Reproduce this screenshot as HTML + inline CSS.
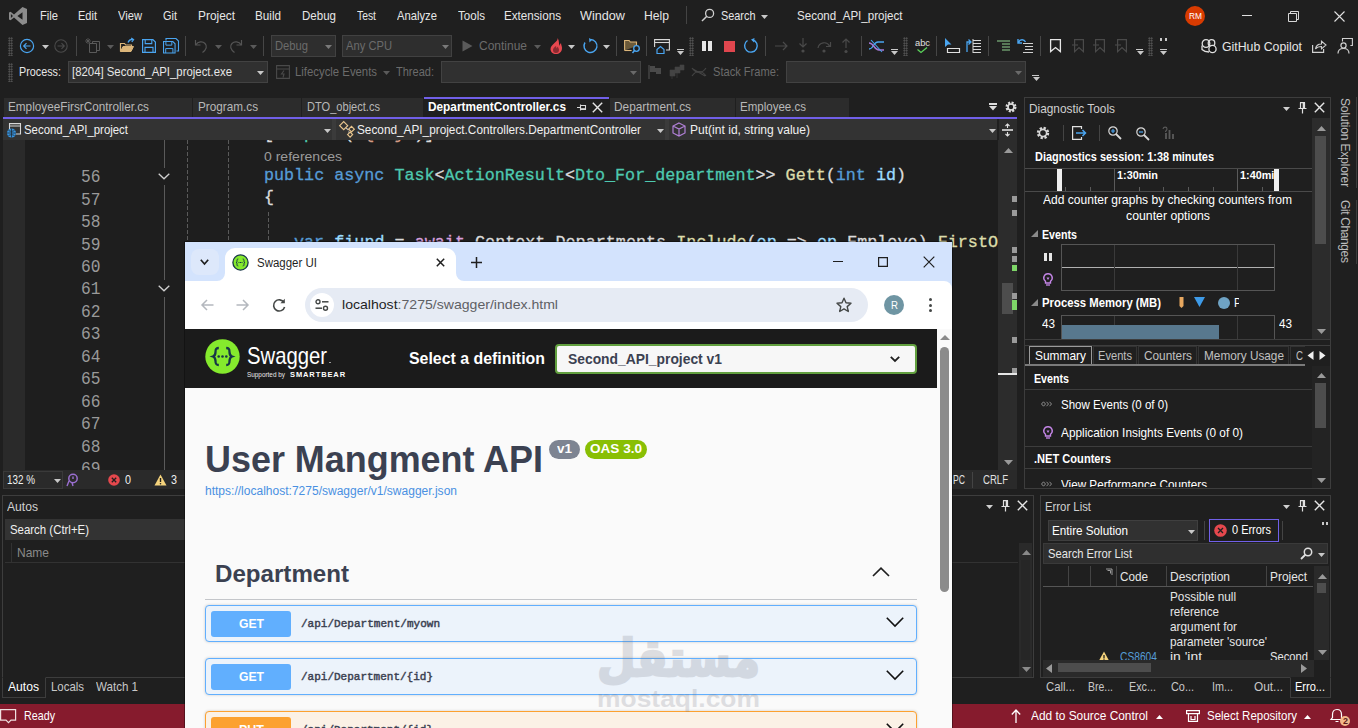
<!DOCTYPE html>
<html><head><meta charset="utf-8"><title>Second_API_project</title>
<style>
*{box-sizing:border-box;margin:0;padding:0}
html,body{width:1358px;height:728px;overflow:hidden;background:#1f1f1f}
body{position:relative;font-family:"Liberation Sans","DejaVu Sans",sans-serif;font-size:12px;color:#e6e6e6}
.a{position:absolute;white-space:nowrap}
.t{position:absolute;white-space:pre;transform-origin:0 50%}
.mono{font-family:"Liberation Mono","DejaVu Sans Mono",monospace;-webkit-text-stroke-width:.3px}
svg{position:absolute;overflow:visible}
.grip{position:absolute;width:5px;background-image:radial-gradient(circle,#5e5e5e 0.75px,transparent 1px);background-size:2.5px 2.5px}
.kw{color:#569cd6}.ty{color:#4ec9b0}.id{color:#9cdcfe}.fn{color:#dcdcaa}.pl{color:#dcdcdc}.cf{color:#d8a0df}
</style></head><body>
<svg style="left:8px;top:6px;" width="20" height="20" viewBox="0 0 20 20"><path d="M14.5 1 19 3v14l-4.5 2L6 11.6 2.6 14.2 1 13.4V6.6l1.6-.8L6 8.4ZM14.5 6.2 9.4 10l5.1 3.8ZM2.9 8.1v3.8L5 10Z" fill="#8c8c8c" fill-rule="evenodd"/></svg>
<div class="t" style="left:40px;top:7.77px;font-size:12.2px;line-height:16px;color:#e6e6e6;transform:scaleX(0.9165);">File</div>
<div class="t" style="left:78px;top:7.77px;font-size:12.2px;line-height:16px;color:#e6e6e6;transform:scaleX(0.9041);">Edit</div>
<div class="t" style="left:118px;top:7.77px;font-size:12.2px;line-height:16px;color:#e6e6e6;transform:scaleX(0.9159);">View</div>
<div class="t" style="left:163px;top:7.77px;font-size:12.2px;line-height:16px;color:#e6e6e6;transform:scaleX(0.8987);">Git</div>
<div class="t" style="left:198px;top:7.77px;font-size:12.2px;line-height:16px;color:#e6e6e6;transform:scaleX(0.9753);">Project</div>
<div class="t" style="left:255px;top:7.77px;font-size:12.2px;line-height:16px;color:#e6e6e6;transform:scaleX(0.9591);">Build</div>
<div class="t" style="left:302px;top:7.77px;font-size:12.2px;line-height:16px;color:#e6e6e6;transform:scaleX(0.9465);">Debug</div>
<div class="t" style="left:357px;top:7.77px;font-size:12.2px;line-height:16px;color:#e6e6e6;transform:scaleX(0.8498);">Test</div>
<div class="t" style="left:397px;top:7.77px;font-size:12.2px;line-height:16px;color:#e6e6e6;transform:scaleX(0.9225);">Analyze</div>
<div class="t" style="left:458px;top:7.77px;font-size:12.2px;line-height:16px;color:#e6e6e6;transform:scaleX(0.9489);">Tools</div>
<div class="t" style="left:504px;top:7.77px;font-size:12.2px;line-height:16px;color:#e6e6e6;transform:scaleX(0.9560);">Extensions</div>
<div class="t" style="left:580px;top:7.77px;font-size:12.2px;line-height:16px;color:#e6e6e6;transform:scaleX(1.0378);">Window</div>
<div class="t" style="left:644px;top:7.77px;font-size:12.2px;line-height:16px;color:#e6e6e6;transform:scaleX(0.9969);">Help</div>
<div class="a" style="left:686px;top:6px;width:1px;height:18px;background:#444;"></div>
<svg style="left:701px;top:8px;" width="14" height="14" viewBox="0 0 14 14"><circle cx="8.6" cy="5.4" r="4" fill="none" stroke="#d0d0d0" stroke-width="1.3"/><path d="M5.8 8.2 1 13" stroke="#d0d0d0" stroke-width="1.5"/></svg>
<div class="t" style="left:721px;top:7.77px;font-size:12.2px;line-height:16px;color:#e6e6e6;transform:scaleX(0.8932);">Search</div>
<svg style="left:761px;top:15px;" width="7" height="4" viewBox="0 0 7 4"><path d="M0 0H7L3.5 4Z" fill="#c8c8c8"/></svg>
<div class="t" style="left:796.5px;top:7.77px;font-size:12.2px;line-height:16px;color:#e6e6e6;transform:scaleX(0.9494);">Second_API_project</div>
<div class="a" style="left:1185px;top:6px;width:20px;height:20px;background:#d83b01;border-radius:50%"></div>
<div class="t" style="left:1188.5px;top:11.05px;font-size:8.5px;line-height:11px;color:#fff;transform:scaleX(0.9823);">RM</div>
<div class="a" style="left:1242px;top:15px;width:10px;height:1px;background:#e0e0e0;"></div>
<svg style="left:1288px;top:11px;" width="11" height="11" viewBox="0 0 11 11"><path d="M.5 2.5h8v8h-8z" fill="none" stroke="#d8d8d8"/><path d="M2.5 2.5v-2h8v8h-2" fill="none" stroke="#d8d8d8"/></svg>
<svg style="left:1334px;top:11px;" width="11" height="11" viewBox="0 0 11 11"><path d="M.5.5l10 10M10.500 .5l-10 10" stroke="#e0e0e0" stroke-width="1.1"/></svg>
<div class="grip" style="left:8px;top:37px;height:19px"></div>
<svg style="left:19px;top:38px;" width="16" height="16" viewBox="0 0 16 16"><circle cx="8" cy="8" r="6.6" fill="none" stroke="#4aa5f0" stroke-width="1.2"/><path d="M11.500 8H5M7.5 5.2 4.7 8l2.8 2.8" fill="none" stroke="#4aa5f0" stroke-width="1.2"/></svg>
<svg style="left:42px;top:45px;" width="7" height="4" viewBox="0 0 7 4"><path d="M0 0H7L3.5 4Z" fill="#c8c8c8"/></svg>
<svg style="left:53px;top:38px;" width="16" height="16" viewBox="0 0 16 16"><circle cx="8" cy="8" r="6.2" fill="none" stroke="#4a4a4a" stroke-width="1.1"/><path d="M4.5 8H11M8.5 5.2 11.300 8l-2.800 2.800" fill="none" stroke="#4a4a4a" stroke-width="1.1"/></svg>
<div class="a" style="left:76px;top:36px;width:1px;height:20px;background:#464646;"></div>
<svg style="left:85px;top:38px;" width="16" height="16" viewBox="0 0 16 16"><path d="M4.5 5.500h7v9h-7z M7.5 5.500v-2h7v9h-3" fill="none" stroke="#5a5a5a"/><path d="M3 0v6M0 3h6M1 1l4 4M5 1 1 5" stroke="#5a5a5a" stroke-width=".8"/></svg>
<svg style="left:107px;top:45px;" width="7" height="4" viewBox="0 0 7 4"><path d="M0 0H7L3.5 4Z" fill="#5a5a5a"/></svg>
<svg style="left:119px;top:38px;" width="17" height="16" viewBox="0 0 17 16"><path d="M1.500 13.500v-8h4l1.200 1.500h5.800v2" fill="none" stroke="#dcb67a" stroke-width="1.2"/><path d="M1.500 13.500 4 8.500h10.500l-2.500 5z" fill="#dcb67a" stroke="#dcb67a"/><path d="M9 4.500c1-2.500 3-3.200 5-3M12.200 0l2.300 1.600-1.700 2.200" fill="none" stroke="#4aa5f0" stroke-width="1.3"/></svg>
<svg style="left:142px;top:39px;" width="14" height="14" viewBox="0 0 14 14"><path d="M.6.6h10.300l2.500 2.500v10.300H.6z" fill="none" stroke="#4aa5f0" stroke-width="1.2"/><path d="M3.200.6v4h6.600v-4M3 13.400v-5h8v5" fill="none" stroke="#4aa5f0" stroke-width="1.100"/></svg>
<svg style="left:163px;top:38px;" width="16" height="16" viewBox="0 0 16 16"><g transform="translate(0 3) scale(.9)"><path d="M.6.6h10.300l2.500 2.500v10.300H.6z" fill="none" stroke="#4aa5f0" stroke-width="1.2"/><path d="M3.200.6v4h6.600v-4M3 13.400v-5h8v5" fill="none" stroke="#4aa5f0" stroke-width="1.100"/></g><path d="M3 2.500v-2h10l2.500 2.500v10h-2" fill="none" stroke="#4aa5f0" stroke-width="1.100"/></svg>
<div class="a" style="left:185px;top:36px;width:1px;height:20px;background:#464646;"></div>
<svg style="left:194px;top:39px;" width="14" height="14" viewBox="0 0 14 14"><path d="M1.500 1v5h5" fill="none" stroke="#555" stroke-width="1.2"/><path d="M1.800 5.800C4 2.500 8.500 1.800 11 4.500s1.500 6-2.500 9" fill="none" stroke="#555" stroke-width="1.200"/></svg>
<svg style="left:215px;top:45px;" width="7" height="4" viewBox="0 0 7 4"><path d="M0 0H7L3.5 4Z" fill="#5a5a5a"/></svg>
<svg style="left:229px;top:39px;" width="14" height="14" viewBox="0 0 14 14"><path d="M12.500 1v5h-5" fill="none" stroke="#555" stroke-width="1.2"/><path d="M12.200 5.800C10 2.500 5.500 1.800 3 4.500s-1.500 6 2.500 9" fill="none" stroke="#555" stroke-width="1.200"/></svg>
<svg style="left:250px;top:45px;" width="7" height="4" viewBox="0 0 7 4"><path d="M0 0H7L3.5 4Z" fill="#5a5a5a"/></svg>
<div class="a" style="left:263px;top:36px;width:1px;height:20px;background:#464646;"></div>
<div class="a" style="left:271px;top:35px;width:65px;height:22px;background:#2e2e2e;border:1px solid #414141;"></div>
<div class="t" style="left:275px;top:37.77px;font-size:12.2px;line-height:16px;color:#6b6b6b;transform:scaleX(0.9187);">Debug</div>
<svg style="left:325px;top:45px;" width="7" height="4" viewBox="0 0 7 4"><path d="M0 0H7L3.5 4Z" fill="#7a7a7a"/></svg>
<div class="a" style="left:342px;top:35px;width:110px;height:22px;background:#2e2e2e;border:1px solid #414141;"></div>
<div class="t" style="left:346px;top:37.77px;font-size:12.2px;line-height:16px;color:#6b6b6b;transform:scaleX(0.9177);">Any CPU</div>
<svg style="left:442px;top:45px;" width="7" height="4" viewBox="0 0 7 4"><path d="M0 0H7L3.5 4Z" fill="#7a7a7a"/></svg>
<svg style="left:462px;top:40px;" width="11" height="12" viewBox="0 0 11 12"><path d="M.5.500 10.500 6 .5 11.500Z" fill="#5a5a5a"/></svg>
<div class="t" style="left:479px;top:37.77px;font-size:12.2px;line-height:16px;color:#6b6b6b;transform:scaleX(0.9837);">Continue</div>
<svg style="left:534px;top:45px;" width="7" height="4" viewBox="0 0 7 4"><path d="M0 0H7L3.5 4Z" fill="#5a5a5a"/></svg>
<svg style="left:548px;top:38px;" width="16" height="16" viewBox="0 0 16 16"><path d="M9.500 0c.5 2-1 3-2.500 4.500C5 6.500 2.500 8 2.500 11c0 3 2.500 5 5.500 5s6-2 6-6c0-2-1-3-1-5-1 1-1.500 2-1.500 3C10.500 5.500 11.500 2.500 9.500 0z" fill="#e8484f"/><path d="M8 8c-2 1.500-3 2.500-3 4a3 3 0 006 0c0-1.500-1-2-1-3.500-.8.500-1.200 1.200-1.200 2C8 9.500 8.500 9 8 8z" fill="#8a2a30"/></svg>
<svg style="left:568px;top:45px;" width="7" height="4" viewBox="0 0 7 4"><path d="M0 0H7L3.5 4Z" fill="#c8c8c8"/></svg>
<svg style="left:582px;top:38px;" width="16" height="16" viewBox="0 0 16 16"><path d="M8.500 1.500A6.500 6.500 0 1 1 3 4.500" fill="none" stroke="#4aa5f0" stroke-width="1.400"/><path d="M5.500 1.200h4v4" fill="none" stroke="#4aa5f0" stroke-width="0"/><path d="M7 0l3 1.800L7.500 4.500z" fill="#4aa5f0"/></svg>
<svg style="left:603px;top:45px;" width="7" height="4" viewBox="0 0 7 4"><path d="M0 0H7L3.5 4Z" fill="#c8c8c8"/></svg>
<div class="a" style="left:616px;top:36px;width:1px;height:20px;background:#464646;"></div>
<svg style="left:624px;top:38px;" width="17" height="16" viewBox="0 0 17 16"><path d="M.6 12.500v-10h4.500l1.200 1.500h6.200v4" fill="#6b5a3a" stroke="#dcb67a" stroke-width="1.1"/><path d="M.6 12.500h7" stroke="#dcb67a" stroke-width="1.1"/><circle cx="12.500" cy="10.500" r="2.800" fill="#1f1f1f" stroke="#4aa5f0" stroke-width="1.300"/><path d="M10.500 12.500 8.500 15" stroke="#4aa5f0" stroke-width="1.500"/></svg>
<div class="a" style="left:646px;top:36px;width:1px;height:20px;background:#464646;"></div>
<svg style="left:654px;top:38px;" width="16" height="16" viewBox="0 0 16 16"><path d="M.6 9V1.600h14.800V12H12" fill="none" stroke="#d8d8d8" stroke-width="1.1"/><path d="M.6 4.500h14.800" stroke="#d8d8d8" stroke-width="1.100"/><path d="M3 11.500 6.500 8.500l3.500 3v4H3z" fill="none" stroke="#4aa5f0" stroke-width="1.200"/></svg>
<div class="a" style="left:677px;top:49px;width:7px;height:1px;background:#c8c8c8;"></div>
<svg style="left:677px;top:51px;" width="7" height="4" viewBox="0 0 7 4"><path d="M0 0H7L3.5 4Z" fill="#c8c8c8"/></svg>
<div class="grip" style="left:689px;top:37px;height:19px"></div>
<div class="a" style="left:702px;top:41px;width:4px;height:10px;background:#e6e6e6;"></div>
<div class="a" style="left:708px;top:41px;width:4px;height:10px;background:#e6e6e6;"></div>
<div class="a" style="left:724px;top:41px;width:11px;height:11px;background:#e0464e;"></div>
<svg style="left:743px;top:38px;" width="16" height="16" viewBox="0 0 16 16"><path d="M4.500 2.500A6.300 6.300 0 1 0 9.500 1.700" fill="none" stroke="#4aa5f0" stroke-width="1.400"/><path d="M7 4.800V.6h4.200" fill="none" stroke="#4aa5f0" stroke-width="0"/><path d="M11.500 0 8 1.500l3 3z" fill="#4aa5f0"/></svg>
<div class="a" style="left:765px;top:36px;width:1px;height:20px;background:#464646;"></div>
<svg style="left:775px;top:40px;" width="14" height="12" viewBox="0 0 14 12"><path d="M0 6h12M8 2l4 4-4 4" fill="none" stroke="#4a4a4a" stroke-width="1.200"/></svg>
<svg style="left:797px;top:38px;" width="12" height="16" viewBox="0 0 12 16"><path d="M6 0v9M2.500 5.500 6 9l3.500-3.500" fill="none" stroke="#4a4a4a" stroke-width="1.200"/><circle cx="6" cy="13" r="1.600" fill="#4a4a4a"/></svg>
<svg style="left:817px;top:39px;" width="15" height="14" viewBox="0 0 15 14"><path d="M1 9C2 3 10 2 12.500 7M13.500 3v4.500H9" fill="none" stroke="#4a4a4a" stroke-width="1.200"/><circle cx="7" cy="12" r="1.600" fill="#4a4a4a"/></svg>
<svg style="left:840px;top:38px;" width="12" height="16" viewBox="0 0 12 16"><path d="M6 10V1M2.500 4.500 6 1l3.500 3.500" fill="none" stroke="#4a4a4a" stroke-width="1.200"/><circle cx="6" cy="13.500" r="1.600" fill="#4a4a4a"/></svg>
<div class="a" style="left:861px;top:36px;width:1px;height:20px;background:#464646;"></div>
<svg style="left:869px;top:39px;" width="16" height="14" viewBox="0 0 16 14"><path d="M0 10c5 0 4-7 9-7h6" fill="none" stroke="#4aa5f0" stroke-width="1.300"/><path d="M0 4c5 0 5 7 10 7h5" fill="none" stroke="#a679d8" stroke-width="1.300"/><path d="M2 1l11 12" stroke="#4aa5f0" stroke-width="1.100"/></svg>
<div class="a" style="left:891px;top:49px;width:7px;height:1px;background:#c8c8c8;"></div>
<svg style="left:891px;top:51px;" width="7" height="4" viewBox="0 0 7 4"><path d="M0 0H7L3.5 4Z" fill="#c8c8c8"/></svg>
<div class="grip" style="left:903px;top:37px;height:19px"></div>
<div class="t" style="left:914.5px;top:36.88px;font-size:9px;line-height:12px;color:#e0e0e0;transform:scaleX(1.0334);">abc</div>
<svg style="left:917px;top:47px;" width="11" height="6" viewBox="0 0 11 6"><path d="M.5 2.500 4 5.500 10 .5" fill="none" stroke="#5bd35b" stroke-width="1.300"/></svg>
<div class="a" style="left:936px;top:36px;width:1px;height:20px;background:#464646;"></div>
<svg style="left:944px;top:38px;" width="17" height="16" viewBox="0 0 17 16"><path d="M1 0l6.500 6.500H4L1 9z" fill="#4aa5f0"/><path d="M3.500 10.500h12v4h-12z" fill="none" stroke="#e0e0e0" stroke-width="1.200"/></svg>
<svg style="left:966px;top:38px;" width="16" height="16" viewBox="0 0 16 16"><path d="M7 2.500h8M7 5.500h8M7 8.500h8M7 11.500h8M7 14.500h8" stroke="#d8d8d8" stroke-width="1.200"/><path d="M7 1v14" stroke="#d8d8d8"/><path d="M1 14V4h3M2.500 1.500 5 4 2.500 6.500" fill="none" stroke="#4aa5f0" stroke-width="1.300"/></svg>
<div class="a" style="left:988px;top:36px;width:1px;height:20px;background:#464646;"></div>
<svg style="left:997px;top:40px;" width="14" height="12" viewBox="0 0 14 12"><path d="M0 1h13M5 4h8M5 7h8M5 10h8" stroke="#8fd18f" stroke-width="1.200"/></svg>
<svg style="left:1017px;top:38px;" width="17" height="15" viewBox="0 0 17 15"><path d="M6 5.500h10M8 8.500h8M8 11.500h8M6 14.500h10" stroke="#d0d0d0" stroke-width="1.200"/><path d="M1 1v4h4M1.500 4.500C3 1 7 1 8.500 4" fill="none" stroke="#4aa5f0" stroke-width="1.400"/></svg>
<div class="a" style="left:1040px;top:36px;width:1px;height:20px;background:#464646;"></div>
<svg style="left:1050px;top:39px;" width="11" height="14" viewBox="0 0 11 14"><path d="M.6.6h9.800v12L5.500 8.500.6 12.600z" fill="none" stroke="#e6e6e6" stroke-width="1.300"/></svg>
<svg style="left:1072px;top:39px;" width="13" height="14" viewBox="0 0 13 14"><path d="M2.600.6h8.800v12L7 8.500 2.600 12.600z" fill="none" stroke="#4a4a4a" stroke-width="1.200"/><path d="M0 6h6" stroke="#4a4a4a" stroke-width="1.100"/></svg>
<svg style="left:1093px;top:39px;" width="13" height="14" viewBox="0 0 13 14"><path d="M2.600.6h8.800v12L7 8.500 2.600 12.600z" fill="none" stroke="#4a4a4a" stroke-width="1.200"/><path d="M0 6h6" stroke="#4a4a4a" stroke-width="1.100"/></svg>
<svg style="left:1115px;top:39px;" width="13" height="14" viewBox="0 0 13 14"><path d="M2.600.6h8.800v12L7 8.500 2.600 12.600z" fill="none" stroke="#4a4a4a" stroke-width="1.200"/><path d="M0 6h6" stroke="#4a4a4a" stroke-width="1.100"/></svg>
<div class="a" style="left:1136px;top:49px;width:7px;height:1px;background:#c8c8c8;"></div>
<svg style="left:1136.5px;top:51px;" width="7" height="4" viewBox="0 0 7 4"><path d="M0 0H7L3.5 4Z" fill="#c8c8c8"/></svg>
<div class="grip" style="left:1148px;top:37px;height:19px"></div>
<div class="a" style="left:1160px;top:38px;width:2px;height:3px;background:#c8c8c8;"></div>
<div class="a" style="left:1165px;top:38px;width:2px;height:3px;background:#c8c8c8;"></div>
<div class="a" style="left:1160px;top:49px;width:7px;height:1px;background:#c8c8c8;"></div>
<svg style="left:1160px;top:51px;" width="7" height="4" viewBox="0 0 7 4"><path d="M0 0H7L3.5 4Z" fill="#c8c8c8"/></svg>
<svg style="left:1201px;top:38px;" width="16" height="16" viewBox="0 0 16 16"><circle cx="5" cy="5.500" r="3.800" fill="none" stroke="#e0e0e0" stroke-width="1.300"/><circle cx="10.500" cy="5" r="3.300" fill="none" stroke="#e0e0e0" stroke-width="1.300"/><path d="M1 7.500v4c2 2 5 2.500 7 2.500" fill="none" stroke="#e0e0e0" stroke-width="1.300"/><circle cx="11.500" cy="11" r="3.600" fill="#111" stroke="#e0e0e0" stroke-width="1.300"/></svg>
<div class="t" style="left:1222px;top:37.50px;font-size:13px;line-height:17px;color:#e6e6e6;transform:scaleX(0.9462);">GitHub Copilot</div>
<svg style="left:1312px;top:39px;" width="15" height="14" viewBox="0 0 15 14"><path d="M.6 6v7.400h11V10" fill="none" stroke="#d0d0d0" stroke-width="1.200"/><path d="M3.500 10c.5-3.500 3-5 6-5V2.200L14 6l-4.500 3.800V7.500c-2.500 0-4.500.5-6 2.500z" fill="none" stroke="#d0d0d0" stroke-width="1.100"/></svg>
<svg style="left:1337px;top:38px;" width="16" height="16" viewBox="0 0 16 16"><path d="M5.500 3.500v-3h9.900v7h-2" fill="none" stroke="#d0d0d0" stroke-width="1.100"/><circle cx="6.500" cy="7.500" r="2.600" fill="none" stroke="#d0d0d0" stroke-width="1.200"/><path d="M1 15.500c0-3.500 2.500-5 5.500-5s5.500 1.500 5.500 5" fill="none" stroke="#d0d0d0" stroke-width="1.200"/></svg>
<div class="grip" style="left:8px;top:63px;height:19px"></div>
<div class="t" style="left:19px;top:63.77px;font-size:12.2px;line-height:16px;color:#e6e6e6;transform:scaleX(0.8857);">Process:</div>
<div class="a" style="left:68px;top:61px;width:200px;height:22px;background:#303030;border:1px solid #424242;"></div>
<div class="t" style="left:72px;top:63.77px;font-size:12.2px;line-height:16px;color:#e6e6e6;transform:scaleX(0.9333);">[8204] Second_API_project.exe</div>
<svg style="left:257px;top:71px;" width="7" height="4" viewBox="0 0 7 4"><path d="M0 0H7L3.5 4Z" fill="#c8c8c8"/></svg>
<svg style="left:276px;top:65px;" width="14" height="14" viewBox="0 0 14 14"><path d="M.6.6h12.800v12.800H.6zM.6 4h12.800" fill="none" stroke="#4a4a4a" stroke-width="1.100"/><path d="M8 5.500 5.500 9H8l-1 3.500" fill="none" stroke="#4a4a4a" stroke-width="1.100"/></svg>
<div class="t" style="left:295px;top:63.77px;font-size:12.2px;line-height:16px;color:#6b6b6b;transform:scaleX(0.9312);">Lifecycle Events</div>
<svg style="left:383px;top:71px;" width="7" height="4" viewBox="0 0 7 4"><path d="M0 0H7L3.5 4Z" fill="#5a5a5a"/></svg>
<div class="t" style="left:396px;top:63.77px;font-size:12.2px;line-height:16px;color:#6b6b6b;transform:scaleX(0.9044);">Thread:</div>
<div class="a" style="left:441px;top:61px;width:200px;height:22px;background:#303030;border:1px solid #424242;"></div>
<svg style="left:630px;top:71px;" width="7" height="4" viewBox="0 0 7 4"><path d="M0 0H7L3.5 4Z" fill="#6a6a6a"/></svg>
<svg style="left:648px;top:65px;" width="14" height="14" viewBox="0 0 14 14"><path d="M1 0v14" stroke="#4a4a4a" stroke-width="1.300"/><path d="M2 1h5v2h6v6H8V7H2z" fill="#4a4a4a"/></svg>
<svg style="left:670px;top:65px;" width="15" height="14" viewBox="0 0 15 14"><path d="M0 5h5v6H0zM5 2h5v6H5zM10 0h4v5h-4zM2 11v3M7 8v5" fill="#444" stroke="#444" stroke-width=".6"/></svg>
<svg style="left:692px;top:66px;" width="15" height="12" viewBox="0 0 15 12"><path d="M0 2c4 6 10 6 14 0M0 10c4-6 10-6 14 0M1 3l12 7" fill="none" stroke="#444" stroke-width="1.100"/></svg>
<div class="t" style="left:713px;top:63.77px;font-size:12.2px;line-height:16px;color:#6b6b6b;transform:scaleX(0.9107);">Stack Frame:</div>
<div class="a" style="left:786px;top:61px;width:240px;height:22px;background:#303030;border:1px solid #424242;"></div>
<svg style="left:1015px;top:71px;" width="7" height="4" viewBox="0 0 7 4"><path d="M0 0H7L3.5 4Z" fill="#6a6a6a"/></svg>
<div class="a" style="left:1032px;top:75px;width:7px;height:1px;background:#c8c8c8;"></div>
<svg style="left:1032.5px;top:77px;" width="7" height="4" viewBox="0 0 7 4"><path d="M0 0H7L3.5 4Z" fill="#c8c8c8"/></svg>
<div class="a" style="left:4px;top:98px;width:188px;height:19px;background:#2c2c2c;"></div>
<div class="t" style="left:8px;top:99.27px;font-size:12.2px;line-height:16px;color:#b8b8b8;transform:scaleX(0.9638);">EmployeeFirsrController.cs</div>
<div class="a" style="left:193px;top:98px;width:108px;height:19px;background:#2c2c2c;"></div>
<div class="t" style="left:198px;top:99.27px;font-size:12.2px;line-height:16px;color:#b8b8b8;transform:scaleX(0.9629);">Program.cs</div>
<div class="a" style="left:302px;top:98px;width:121px;height:19px;background:#2c2c2c;"></div>
<div class="t" style="left:307px;top:99.27px;font-size:12.2px;line-height:16px;color:#b8b8b8;transform:scaleX(0.9081);">DTO_object.cs</div>
<div class="a" style="left:610px;top:98px;width:125px;height:19px;background:#2c2c2c;"></div>
<div class="t" style="left:614px;top:99.27px;font-size:12.2px;line-height:16px;color:#b8b8b8;transform:scaleX(0.9716);">Department.cs</div>
<div class="a" style="left:736px;top:98px;width:113px;height:19px;background:#2c2c2c;"></div>
<div class="t" style="left:740px;top:99.27px;font-size:12.2px;line-height:16px;color:#b8b8b8;transform:scaleX(0.9458);">Employee.cs</div>
<div class="a" style="left:424px;top:97px;width:185px;height:2px;background:#7160e8;"></div>
<div class="a" style="left:424px;top:99px;width:185px;height:18px;background:#1f1f1f;"></div>
<div class="t" style="left:428px;top:99.27px;font-size:12.2px;line-height:16px;color:#ffffff;font-weight:700;transform:scaleX(0.9702);">DepartmentController.cs</div>
<svg style="left:577px;top:103px;" width="10" height="9" viewBox="0 0 10 9"><path d="M0 4.500h3.500M3.500 1.500v6M3.500 2.500h5v4h-5" fill="none" stroke="#d8d8d8" stroke-width="1.100"/><path d="M3.500 6h5" stroke="#d8d8d8" stroke-width="1.600"/></svg>
<svg style="left:592px;top:102px;" width="11" height="11" viewBox="0 0 11 11"><path d="M.8.800l9.400 9.400M10.200.8.800 10.200" stroke="#e6e6e6" stroke-width="1.400"/></svg>
<div class="a" style="left:989px;top:103px;width:8px;height:2px;background:#dcdcdc;"></div>
<svg style="left:989.0px;top:106px;" width="8.0" height="4.5" viewBox="0 0 8.0 4.5"><path d="M0 0H8.0L4.0 4.5Z" fill="#dcdcdc"/></svg>
<svg style="left:1004.5px;top:101px;" width="12" height="12" viewBox="0 0 12 12"><circle cx="6" cy="6" r="4" fill="none" stroke="#dcdcdc" stroke-width="3" stroke-dasharray="1.900 1.240"/><circle cx="6" cy="6" r="3" fill="none" stroke="#dcdcdc" stroke-width="1.600"/></svg>
<div class="a" style="left:3px;top:117px;width:1014px;height:2px;background:#7160e8;"></div>
<div class="a" style="left:3px;top:119px;width:1014px;height:21px;background:#1f1f1f;"></div>
<div class="a" style="left:3px;top:119px;width:329px;height:21px;background:#333333;"></div>
<div class="a" style="left:332px;top:119px;width:4px;height:21px;background:#3b3b3b;"></div>
<div class="a" style="left:336px;top:119px;width:329px;height:21px;background:#333333;"></div>
<div class="a" style="left:665px;top:119px;width:4px;height:21px;background:#3b3b3b;"></div>
<div class="a" style="left:669px;top:119px;width:328px;height:21px;background:#333333;"></div>
<div class="a" style="left:999px;top:119px;width:18px;height:21px;background:#2c2c2c;"></div>
<svg style="left:6px;top:122px;" width="16" height="16" viewBox="0 0 16 16"><path d="M3.500 10V1.600h11V12H10" fill="none" stroke="#d8d8d8" stroke-width="1.100"/><path d="M3.500 4h11" stroke="#d8d8d8"/><circle cx="5.500" cy="11" r="4.500" fill="#3794e0"/><path d="M1 11h9M5.500 6.500v9M2.500 8.500c2 1 4 1 6 0M2.500 13.500c2-1 4-1 6 0" fill="none" stroke="#1f1f1f" stroke-width=".7"/></svg>
<div class="t" style="left:24px;top:121.77px;font-size:12.2px;line-height:16px;color:#f0f0f0;transform:scaleX(0.9359);">Second_API_project</div>
<svg style="left:323.5px;top:129px;" width="7" height="4" viewBox="0 0 7 4"><path d="M0 0H7L3.5 4Z" fill="#c8c8c8"/></svg>
<svg style="left:339px;top:121px;" width="16" height="17" viewBox="0 0 16 17"><path d="M7 7l2.500 2M9.500 10.500l1 1.500" stroke="#bdbdbd" stroke-width="1.100"/><path d="M.7 4.700 4.700.7l4 4-4 4z" fill="none" stroke="#e8c58d" stroke-width="1.200"/><path d="M9.700 8.200 12.500 5.400l2.800 2.800-2.800 2.800z" fill="none" stroke="#e8c58d" stroke-width="1.200"/><path d="M8.600 13.600l2.500-2.500 2.500 2.500-2.500 2.500z" fill="none" stroke="#e8c58d" stroke-width="1.200"/></svg>
<div class="t" style="left:357px;top:121.77px;font-size:12.2px;line-height:16px;color:#f0f0f0;transform:scaleX(0.9682);">Second_API_project.Controllers.DepartmentController</div>
<svg style="left:656.5px;top:129px;" width="7" height="4" viewBox="0 0 7 4"><path d="M0 0H7L3.5 4Z" fill="#c8c8c8"/></svg>
<svg style="left:672px;top:122px;" width="14" height="15" viewBox="0 0 14 15"><path d="M7 1 13 4v7l-6 3-6-3V4z M1 4l6 3 6-3M7 7v7" fill="none" stroke="#b180d7" stroke-width="1.200"/></svg>
<div class="t" style="left:690px;top:121.77px;font-size:12.2px;line-height:16px;color:#f0f0f0;transform:scaleX(0.9896);">Put(int id, string value)</div>
<svg style="left:988.5px;top:129px;" width="7" height="4" viewBox="0 0 7 4"><path d="M0 0H7L3.5 4Z" fill="#c8c8c8"/></svg>
<svg style="left:1002px;top:123.5px;" width="12" height="12" viewBox="0 0 12 12"><path d="M0 6h11" stroke="#e0e0e0" stroke-width="1.600"/><path d="M5.500 0v4M5.500 8v4M3.500 2 5.500 0l2 2M3.500 10l2 2 2-2" fill="none" stroke="#e0e0e0" stroke-width="1.100"/></svg>
<div class="a" style="left:3px;top:140px;width:995px;height:330px;background:#1e1e1e;"></div>
<div class="a" style="left:3px;top:140px;width:22px;height:330px;background:#2a2a2a;"></div>
<div class="a" style="left:164px;top:140px;width:1px;height:28px;background:#5a5a5a;"></div>
<div class="a" style="left:164px;top:185px;width:1px;height:95px;background:#5a5a5a;"></div>
<div class="a" style="left:164px;top:297px;width:1px;height:173px;background:#5a5a5a;"></div>
<svg style="left:158px;top:173px;" width="12" height="7" viewBox="0 0 12 7"><path d="M.7.700 6 5.800 11.300.7" fill="none" stroke="#d0d0d0" stroke-width="1.300"/></svg>
<svg style="left:158px;top:285px;" width="12" height="7" viewBox="0 0 12 7"><path d="M.7.700 6 5.800 11.300.7" fill="none" stroke="#d0d0d0" stroke-width="1.300"/></svg>
<div class="a" style="left:187px;top:140px;width:1px;height:330px;background:repeating-linear-gradient(#5a5a5a 0 4px,transparent 4px 6px)"></div>
<div class="a" style="left:228px;top:140px;width:1px;height:330px;background:repeating-linear-gradient(#5a5a5a 0 4px,transparent 4px 6px)"></div>
<div class="a" style="left:268px;top:212px;width:1px;height:258px;background:repeating-linear-gradient(#5a5a5a 0 4px,transparent 4px 6px)"></div>
<div class="t mono" style="left:81px;top:166.14px;font-size:17.5px;line-height:23px;color:#9a9a9a;transform:scaleX(0.9279);-webkit-text-stroke-width:0;">56</div>
<div class="t mono" style="left:81px;top:188.60px;font-size:17.5px;line-height:23px;color:#9a9a9a;transform:scaleX(0.9279);-webkit-text-stroke-width:0;">57</div>
<div class="t mono" style="left:81px;top:211.06px;font-size:17.5px;line-height:23px;color:#9a9a9a;transform:scaleX(0.9279);-webkit-text-stroke-width:0;">58</div>
<div class="t mono" style="left:81px;top:233.52px;font-size:17.5px;line-height:23px;color:#9a9a9a;transform:scaleX(0.9279);-webkit-text-stroke-width:0;">59</div>
<div class="t mono" style="left:81px;top:255.98px;font-size:17.5px;line-height:23px;color:#9a9a9a;transform:scaleX(0.9279);-webkit-text-stroke-width:0;">60</div>
<div class="t mono" style="left:81px;top:278.44px;font-size:17.5px;line-height:23px;color:#9a9a9a;transform:scaleX(0.9279);-webkit-text-stroke-width:0;">61</div>
<div class="t mono" style="left:81px;top:300.90px;font-size:17.5px;line-height:23px;color:#9a9a9a;transform:scaleX(0.9279);-webkit-text-stroke-width:0;">62</div>
<div class="t mono" style="left:81px;top:323.36px;font-size:17.5px;line-height:23px;color:#9a9a9a;transform:scaleX(0.9279);-webkit-text-stroke-width:0;">63</div>
<div class="t mono" style="left:81px;top:345.82px;font-size:17.5px;line-height:23px;color:#9a9a9a;transform:scaleX(0.9279);-webkit-text-stroke-width:0;">64</div>
<div class="t mono" style="left:81px;top:368.28px;font-size:17.5px;line-height:23px;color:#9a9a9a;transform:scaleX(0.9279);-webkit-text-stroke-width:0;">65</div>
<div class="t mono" style="left:81px;top:390.74px;font-size:17.5px;line-height:23px;color:#9a9a9a;transform:scaleX(0.9279);-webkit-text-stroke-width:0;">66</div>
<div class="t mono" style="left:81px;top:413.20px;font-size:17.5px;line-height:23px;color:#9a9a9a;transform:scaleX(0.9279);-webkit-text-stroke-width:0;">67</div>
<div class="t mono" style="left:81px;top:435.66px;font-size:17.5px;line-height:23px;color:#9a9a9a;transform:scaleX(0.9279);-webkit-text-stroke-width:0;">68</div>
<div class="t mono" style="left:81px;top:458.12px;font-size:17.5px;line-height:23px;color:#9a9a9a;transform:scaleX(0.9279);-webkit-text-stroke-width:0;">69</div>
<div class="a" style="left:260px;top:140px;width:200px;height:6px;overflow:hidden"><div class="t mono" style="left:4px;top:-15.500px;font-size:16.700px;line-height:20px;color:#dcdcdc">[<span class="ty">HttpGet</span>(<span style="color:#d69d85">"{id}"</span>)]</div></div>
<div class="t" style="left:264px;top:148.60px;font-size:12.7px;line-height:17px;color:#9a9a9a;transform:scaleX(1.1059);">0 references</div>
<div class="t mono" style="left:264px;top:164.55px;font-size:16.7px;line-height:22px;color:#dcdcdc;transform:scaleX(1.0016);"><span class="kw">public async</span> <span class="ty">Task</span><span class="pl">&lt;</span><span class="ty">ActionResult</span><span class="pl">&lt;</span><span class="ty">Dto_For_department</span><span class="pl">&gt;&gt;</span> <span class="fn">Gett</span><span class="pl">(</span><span class="kw">int</span> <span class="id">id</span><span class="pl">)</span></div>
<div class="t mono" style="left:264px;top:186.95px;font-size:16.7px;line-height:22px;color:#dcdcdc;transform:scaleX(0.9984);">{</div>
<div class="t mono" style="left:294px;top:232.45px;font-size:16.7px;line-height:22px;color:#dcdcdc;transform:scaleX(1.0042);"><span class="kw">var</span> <span class="id">fiund</span> = <span class="cf">await</span> Context.Departments.<span class="fn">Include</span>(<span class="id">op</span> =&gt; <span class="id">op</span>.Employe).<span class="fn">FirstO</span></div>
<div class="a" style="left:998px;top:140px;width:19px;height:330px;background:#2c2c2c;"></div>
<svg style="left:1003.5px;top:148px;" width="9" height="5" viewBox="0 0 9 5"><path d="M0 5H9L4.5 0Z" fill="#9a9a9a"/></svg>
<svg style="left:1003.5px;top:460px;" width="9" height="5" viewBox="0 0 9 5"><path d="M0 0H9L4.5 5Z" fill="#9a9a9a"/></svg>
<div class="a" style="left:1002px;top:283px;width:11px;height:31px;background:#4d4d4d;"></div>
<div class="a" style="left:1012px;top:196px;width:5px;height:6px;background:#9a9a9a;"></div>
<div class="a" style="left:1012px;top:210px;width:5px;height:6px;background:#9a9a9a;"></div>
<div class="a" style="left:1012px;top:247px;width:5px;height:6px;background:#9a9a9a;"></div>
<div class="a" style="left:1012px;top:256px;width:5px;height:6px;background:#9a9a9a;"></div>
<div class="a" style="left:1012px;top:293px;width:5px;height:6px;background:#9a9a9a;"></div>
<div class="a" style="left:1012px;top:337px;width:5px;height:6px;background:#9a9a9a;"></div>
<div class="a" style="left:1012px;top:265px;width:5px;height:6px;background:#7ed668;"></div>
<div class="a" style="left:1012px;top:300px;width:5px;height:10px;background:#7ed668;"></div>
<div class="a" style="left:998px;top:373px;width:19px;height:2px;background:#e6e6e6;"></div>
<div class="a" style="left:1012px;top:368px;width:5px;height:5px;background:#9a9a9a;"></div>
<div class="a" style="left:3px;top:470px;width:1014px;height:19px;background:#2a2a2a;"></div>
<div class="a" style="left:3px;top:471px;width:60px;height:18px;background:#2a2a2a;border:1px solid #3a3a3a;"></div>
<div class="t" style="left:7px;top:471.84px;font-size:12px;line-height:16px;color:#f0f0f0;transform:scaleX(0.8228);">132 %</div>
<svg style="left:54px;top:479px;" width="7" height="4" viewBox="0 0 7 4"><path d="M0 0H7L3.5 4Z" fill="#c8c8c8"/></svg>
<svg style="left:66px;top:473px;" width="13" height="14" viewBox="0 0 13 14"><circle cx="7" cy="5.500" r="4.200" fill="none" stroke="#9a6fd0" stroke-width="1.500"/><path d="M3 8 1 13M6 9.500l1 3.500M7 3.500v2.500" stroke="#9a6fd0" stroke-width="1.400"/></svg>
<svg style="left:108px;top:474px;" width="12" height="12" viewBox="0 0 12 12"><circle cx="6" cy="6" r="5.800" fill="#e5484d"/><path d="M3.800 3.800l4.400 4.400M8.200 3.800 3.800 8.200" stroke="#1f1f1f" stroke-width="1.300"/></svg>
<div class="t" style="left:125px;top:471.84px;font-size:12px;line-height:16px;color:#f0f0f0;transform:scaleX(0.8972);">0</div>
<svg style="left:154px;top:474px;" width="13" height="12" viewBox="0 0 13 12"><path d="M6.500.5 12.500 11.500H.5z" fill="#f5d37c"/><path d="M6.500 4v4" stroke="#1f1f1f" stroke-width="1.400"/><circle cx="6.500" cy="9.800" r=".8" fill="#1f1f1f"/></svg>
<div class="t" style="left:171px;top:471.84px;font-size:12px;line-height:16px;color:#f0f0f0;transform:scaleX(0.8972);">3</div>
<div class="a" style="left:972px;top:472px;width:1px;height:16px;background:#444;"></div>
<div class="t" style="left:953px;top:471.84px;font-size:12px;line-height:16px;color:#e0e0e0;transform:scaleX(0.7198);">PC</div>
<div class="t" style="left:982.5px;top:471.84px;font-size:12px;line-height:16px;color:#e0e0e0;transform:scaleX(0.7976);">CRLF</div>
<div class="a" style="left:1024px;top:97px;width:307px;height:392px;background:#1f1f1f;border:1px solid #3d3d3d;"></div>
<div class="t" style="left:1029px;top:100.77px;font-size:12.2px;line-height:16px;color:#d0d0d0;transform:scaleX(0.9714);">Diagnostic Tools</div>
<svg style="left:1283px;top:107px;" width="7" height="4" viewBox="0 0 7 4"><path d="M0 0H7L3.5 4Z" fill="#d0d0d0"/></svg>
<svg style="left:1298px;top:102px;" width="9" height="12" viewBox="0 0 9 12"><path d="M2 .600h5M2.500.6v5.900M6.500.6v5.900M.5 6.500h8M4.500 6.500v5" fill="none" stroke="#e0e0e0" stroke-width="1.200"/><path d="M5.500 1v5.500" stroke="#e0e0e0" stroke-width="1.600"/></svg>
<svg style="left:1314px;top:102px;" width="11" height="11" viewBox="0 0 11 11"><path d="M.8.800l9.400 9.400M10.200.8.800 10.200" stroke="#e6e6e6" stroke-width="1.400"/></svg>
<svg style="left:1036px;top:126px;" width="14" height="14" viewBox="0 0 14 14"><circle cx="7" cy="7" r="4.700" fill="none" stroke="#d8d8d8" stroke-width="3" stroke-dasharray="2.100 1.590"/><circle cx="7" cy="7" r="3.600" fill="none" stroke="#d8d8d8" stroke-width="1.600"/></svg>
<div class="a" style="left:1063px;top:125px;width:1px;height:16px;background:#444;"></div>
<svg style="left:1072px;top:126px;" width="15" height="14" viewBox="0 0 15 14"><path d="M9.500 3V.600H.6v12.800h8.900V11" fill="none" stroke="#e0e0e0" stroke-width="1.200"/><path d="M4 7h9.500M10.500 4l3 3-3 3" fill="none" stroke="#4aa5f0" stroke-width="1.500"/></svg>
<div class="a" style="left:1099px;top:125px;width:1px;height:16px;background:#444;"></div>
<svg style="left:1108px;top:126px;" width="14" height="14" viewBox="0 0 14 14"><circle cx="5" cy="5" r="4.200" fill="none" stroke="#d8d8d8" stroke-width="1.200"/><path d="M8 8l5 5" stroke="#d8d8d8" stroke-width="1.800"/><path d="M3 5h4M5 3v4" stroke="#4aa5f0" stroke-width="1.200"/></svg>
<svg style="left:1136px;top:127px;" width="14" height="14" viewBox="0 0 14 14"><circle cx="5" cy="5" r="4.200" fill="none" stroke="#d8d8d8" stroke-width="1.200"/><path d="M8 8l5 5" stroke="#d8d8d8" stroke-width="1.800"/><path d="M3 5h4" stroke="#4aa5f0" stroke-width="1.200"/></svg>
<svg style="left:1162px;top:126px;" width="14" height="14" viewBox="0 0 14 14"><path d="M4 13V7M7.500 13V4M11 13V8" stroke="#5a5a5a" stroke-width="1.800"/><path d="M1 3c.5-2.500 4-2.500 4 0 0 1.500-1.500 1.500-1.500 3" fill="none" stroke="#5a5a5a" stroke-width="1.100"/></svg>
<div class="t" style="left:1035px;top:149.47px;font-size:12.2px;line-height:16px;color:#ffffff;font-weight:700;transform:scaleX(0.8958);">Diagnostics session: 1:38 minutes</div>
<div class="a" style="left:1025px;top:168px;width:287px;height:1px;background:#4a4a4a;"></div>
<div class="a" style="left:1025px;top:191px;width:287px;height:1px;background:#4a4a4a;"></div>
<div class="a" style="left:1057px;top:169px;width:5px;height:22px;background:#f0f0f0;"></div>
<div class="a" style="left:1274px;top:169px;width:5px;height:22px;background:#f0f0f0;"></div>
<div class="a" style="left:1065px;top:187px;width:1px;height:4px;background:#5a5a5a;"></div>
<div class="a" style="left:1090px;top:187px;width:1px;height:4px;background:#5a5a5a;"></div>
<div class="a" style="left:1114px;top:187px;width:1px;height:4px;background:#5a5a5a;"></div>
<div class="a" style="left:1139px;top:187px;width:1px;height:4px;background:#5a5a5a;"></div>
<div class="a" style="left:1163px;top:187px;width:1px;height:4px;background:#5a5a5a;"></div>
<div class="a" style="left:1188px;top:187px;width:1px;height:4px;background:#5a5a5a;"></div>
<div class="a" style="left:1213px;top:187px;width:1px;height:4px;background:#5a5a5a;"></div>
<div class="a" style="left:1237px;top:187px;width:1px;height:4px;background:#5a5a5a;"></div>
<div class="a" style="left:1262px;top:187px;width:1px;height:4px;background:#5a5a5a;"></div>
<div class="a" style="left:1114px;top:169px;width:1px;height:22px;background:#5a5a5a;"></div>
<div class="a" style="left:1237px;top:169px;width:1px;height:22px;background:#5a5a5a;"></div>
<div class="t" style="left:1117px;top:168.02px;font-size:11.5px;line-height:15px;color:#ffffff;font-weight:700;transform:scaleX(0.9432);">1:30min</div>
<div class="a" style="left:1238px;top:169px;width:36px;height:22px;overflow:hidden">
<div class="t" style="left:2px;top:-0.98px;font-size:11.5px;line-height:15px;color:#ffffff;font-weight:700;transform:scaleX(0.9432);">1:40min</div>
</div>
<div class="t" style="left:1043px;top:192.27px;font-size:12.2px;line-height:16px;color:#ffffff;transform:scaleX(0.9880);">Add counter graphs by checking counters from</div>
<div class="t" style="left:1126px;top:208.27px;font-size:12.2px;line-height:16px;color:#ffffff;transform:scaleX(1.0079);">counter options</div>
<svg style="left:1031px;top:230px;" width="7" height="7" viewBox="0 0 7 7"><path d="M7 0v7H0z" fill="#8a8a8a"/></svg>
<div class="t" style="left:1042px;top:226.77px;font-size:12.2px;line-height:16px;color:#ffffff;font-weight:700;transform:scaleX(0.8757);">Events</div>
<div class="a" style="left:1061px;top:244px;width:214px;height:47px;background:#1f1f1f;border:1px solid #555;"></div>
<div class="a" style="left:1062px;top:267px;width:212px;height:1px;background:#b0b0b0;"></div>
<div class="a" style="left:1114px;top:245px;width:1px;height:45px;background:#3a3a3a;"></div>
<div class="a" style="left:1237px;top:245px;width:1px;height:45px;background:#3a3a3a;"></div>
<div class="a" style="left:1044px;top:253px;width:3px;height:8px;background:#e6e6e6;"></div>
<div class="a" style="left:1049px;top:253px;width:3px;height:8px;background:#e6e6e6;"></div>
<svg style="left:1043px;top:273px;" width="10" height="13" viewBox="0 0 10 13"><path d="M5 .700a4.200 4.200 0 0 1 2.500 7.600V10h-5V8.300A4.200 4.200 0 0 1 5 .7z" fill="none" stroke="#c586e8" stroke-width="1.400"/><path d="M3 12h4" stroke="#c586e8" stroke-width="1.300"/><path d="M3.500 4.500h3L5 7z" fill="#c586e8"/></svg>
<svg style="left:1031px;top:299px;" width="7" height="7" viewBox="0 0 7 7"><path d="M7 0v7H0z" fill="#8a8a8a"/></svg>
<div class="t" style="left:1042px;top:295.27px;font-size:12.2px;line-height:16px;color:#ffffff;font-weight:700;transform:scaleX(0.9296);">Process Memory (MB)</div>
<svg style="left:1179px;top:297px;" width="5" height="11" viewBox="0 0 5 11"><path d="M.5 0h4v9L2.500 11 .5 9z" fill="#e8a860"/></svg>
<svg style="left:1194px;top:297px;" width="11" height="10" viewBox="0 0 11 10"><path d="M0 0h11L5.500 10z" fill="#3e9be8"/></svg>
<div class="a" style="left:1218px;top:297px;width:12px;height:12px;background:#6fa3c4;border-radius:50%"></div>
<div class="a" style="left:1233px;top:296px;width:6px;height:16px;overflow:hidden">
<div class="t" style="left:1px;top:-0.73px;font-size:12.2px;line-height:16px;color:#ffffff;transform:scaleX(0.9026);">Pr</div>
</div>
<div class="a" style="left:1061px;top:315px;width:214px;height:24px;background:#1f1f1f;border:1px solid #555;border-bottom:none;"></div>
<div class="a" style="left:1114px;top:316px;width:1px;height:23px;background:#3a3a3a;"></div>
<div class="a" style="left:1237px;top:316px;width:1px;height:23px;background:#3a3a3a;"></div>
<div class="a" style="left:1062px;top:325px;width:157px;height:14px;background:#58788e;"></div>
<div class="t" style="left:1042px;top:315.77px;font-size:12.2px;line-height:16px;color:#ffffff;transform:scaleX(0.9585);">43</div>
<div class="t" style="left:1279px;top:315.77px;font-size:12.2px;line-height:16px;color:#ffffff;transform:scaleX(0.9585);">43</div>
<div class="a" style="left:1312px;top:118px;width:18px;height:221px;background:#2c2c2c;"></div>
<svg style="left:1316.5px;top:126px;" width="9" height="5" viewBox="0 0 9 5"><path d="M0 5H9L4.5 0Z" fill="#9a9a9a"/></svg>
<div class="a" style="left:1315px;top:136px;width:11px;height:108px;background:#4d4d4d;"></div>
<svg style="left:1316.5px;top:329px;" width="9" height="5" viewBox="0 0 9 5"><path d="M0 0H9L4.5 5Z" fill="#9a9a9a"/></svg>
<div class="a" style="left:1025px;top:339px;width:305px;height:1px;background:#3d3d3d;"></div>
<div class="a" style="left:1025px;top:340px;width:305px;height:5px;background:#1f1f1f;"></div>
<div class="a" style="left:1025px;top:345px;width:305px;height:1px;background:#3d3d3d;"></div>
<div class="a" style="left:1029px;top:346px;width:63px;height:19px;background:#1f1f1f;border:1px solid #9a9a9a;"></div>
<div class="t" style="left:1035px;top:347.77px;font-size:12.2px;line-height:16px;color:#ffffff;transform:scaleX(0.9778);">Summary</div>
<div class="a" style="left:1093px;top:346px;width:44px;height:19px;background:#1f1f1f;border:1px solid #333;"></div>
<div class="t" style="left:1098px;top:347.77px;font-size:12.2px;line-height:16px;color:#c0c0c0;transform:scaleX(0.9124);">Events</div>
<div class="a" style="left:1138px;top:346px;width:59px;height:19px;background:#1f1f1f;border:1px solid #333;"></div>
<div class="t" style="left:1144px;top:347.77px;font-size:12.2px;line-height:16px;color:#c0c0c0;transform:scaleX(0.9706);">Counters</div>
<div class="a" style="left:1198px;top:346px;width:91px;height:19px;background:#1f1f1f;border:1px solid #333;"></div>
<div class="t" style="left:1204px;top:347.77px;font-size:12.2px;line-height:16px;color:#c0c0c0;transform:scaleX(0.9680);">Memory Usage</div>
<div class="a" style="left:1290px;top:346px;width:15px;height:19px;background:#1f1f1f;border:1px solid #333;border-right:none;"></div>
<div class="t" style="left:1296px;top:347.77px;font-size:12.2px;line-height:16px;color:#c0c0c0;transform:scaleX(0.7943);">C</div>
<svg style="left:1307px;top:351px;" width="7" height="9" viewBox="0 0 7 9"><path d="M6.500 0v9L.5 4.500z" fill="#f0f0f0"/></svg>
<svg style="left:1319px;top:351px;" width="7" height="9" viewBox="0 0 7 9"><path d="M.5 0v9l6-4.500z" fill="#f0f0f0"/></svg>
<div class="a" style="left:1025px;top:364px;width:280px;height:2px;background:#7a7a7a;"></div>
<div class="t" style="left:1034px;top:370.77px;font-size:12.2px;line-height:16px;color:#ffffff;font-weight:700;transform:scaleX(0.8757);">Events</div>
<div class="a" style="left:1025px;top:389px;width:288px;height:1px;background:#3d3d3d;"></div>
<svg style="left:1041px;top:401px;" width="12" height="6" viewBox="0 0 12 6"><path d="M.5 3 2.500.8l2 2.200-2 2.200zM5.500.8l2 2.200-2 2.200M8.500.8l2 2.200-2 2.200" fill="none" stroke="#9a9a9a" stroke-width=".9"/></svg>
<div class="t" style="left:1061px;top:396.77px;font-size:12.2px;line-height:16px;color:#ffffff;transform:scaleX(0.9457);">Show Events (0 of 0)</div>
<svg style="left:1043px;top:426px;" width="10" height="13" viewBox="0 0 10 13"><path d="M5 .700a4.200 4.200 0 0 1 2.500 7.600V10h-5V8.300A4.200 4.200 0 0 1 5 .7z" fill="none" stroke="#c586e8" stroke-width="1.400"/><path d="M3 12h4" stroke="#c586e8" stroke-width="1.300"/><path d="M3.500 4.500h3L5 7z" fill="#c586e8"/></svg>
<div class="t" style="left:1061px;top:424.77px;font-size:12.2px;line-height:16px;color:#ffffff;transform:scaleX(0.9699);">Application Insights Events (0 of 0)</div>
<div class="a" style="left:1025px;top:446px;width:288px;height:1px;background:#3d3d3d;"></div>
<div class="t" style="left:1034px;top:450.77px;font-size:12.2px;line-height:16px;color:#ffffff;font-weight:700;transform:scaleX(0.9097);">.NET Counters</div>
<div class="a" style="left:1025px;top:468px;width:288px;height:1px;background:#3d3d3d;"></div>
<div class="a" style="left:1025px;top:470px;width:288px;height:17px;overflow:hidden">
<svg style="left:16px;top:11px;" width="12" height="6" viewBox="0 0 12 6"><path d="M.5 3 2.500.8l2 2.200-2 2.200zM5.500.8l2 2.200-2 2.200M8.500.8l2 2.200-2 2.200" fill="none" stroke="#9a9a9a" stroke-width=".9"/></svg>
<div class="t" style="left:36px;top:6.77px;font-size:12.2px;line-height:16px;color:#ffffff;transform:scaleX(0.9592);">View Performance Counters</div>
</div>
<div class="a" style="left:1312px;top:366px;width:18px;height:122px;background:#232323;"></div>
<svg style="left:1316.5px;top:373px;" width="9" height="5" viewBox="0 0 9 5"><path d="M0 5H9L4.5 0Z" fill="#9a9a9a"/></svg>
<div class="a" style="left:1315px;top:383px;width:11px;height:45px;background:#4d4d4d;"></div>
<svg style="left:1316.5px;top:478px;" width="9" height="5" viewBox="0 0 9 5"><path d="M0 0H9L4.5 5Z" fill="#9a9a9a"/></svg>
<div class="a" style="left:1331px;top:97px;width:27px;height:600px;background:#1f1f1f;"></div>
<div class="t" style="left:1337px;top:97.500px;font-size:12px;line-height:15px;color:#bdbdbd;writing-mode:vertical-rl;letter-spacing:-0.140px">Solution Explorer</div>
<div class="t" style="left:1337px;top:200px;font-size:12px;line-height:15px;color:#bdbdbd;writing-mode:vertical-rl;letter-spacing:-0.380px">Git Changes</div>
<div class="a" style="left:1356px;top:97px;width:1px;height:91px;background:#3d3d3d;"></div>
<div class="a" style="left:1356px;top:200px;width:1px;height:64px;background:#3d3d3d;"></div>
<div class="a" style="left:2px;top:495px;width:1032px;height:183px;background:#1f1f1f;border:1px solid #3d3d3d;"></div>
<div class="t" style="left:7px;top:498.77px;font-size:12.2px;line-height:16px;color:#d0d0d0;transform:scaleX(0.9945);">Autos</div>
<svg style="left:986px;top:505px;" width="7" height="4" viewBox="0 0 7 4"><path d="M0 0H7L3.5 4Z" fill="#d0d0d0"/></svg>
<svg style="left:1001px;top:500px;" width="9" height="12" viewBox="0 0 9 12"><path d="M2 .600h5M2.500.6v5.900M6.500.6v5.900M.5 6.500h8M4.500 6.500v5" fill="none" stroke="#e0e0e0" stroke-width="1.200"/><path d="M5.500 1v5.500" stroke="#e0e0e0" stroke-width="1.600"/></svg>
<svg style="left:1017px;top:500px;" width="11" height="11" viewBox="0 0 11 11"><path d="M.8.800l9.400 9.400M10.200.8.800 10.200" stroke="#e6e6e6" stroke-width="1.400"/></svg>
<div class="a" style="left:5px;top:519px;width:900px;height:21px;background:#333333;"></div>
<div class="t" style="left:10px;top:521.77px;font-size:12.2px;line-height:16px;color:#f0f0f0;transform:scaleX(0.9368);">Search (Ctrl+E)</div>
<div class="a" style="left:5px;top:543px;width:1013px;height:20px;background:#1f1f1f;"></div>
<div class="a" style="left:5px;top:562px;width:1013px;height:1px;background:#323232;"></div>
<div class="a" style="left:11px;top:543px;width:1px;height:20px;background:#323232;"></div>
<div class="t" style="left:17px;top:544.77px;font-size:12.2px;line-height:16px;color:#8a8a8a;transform:scaleX(0.9841);">Name</div>
<div class="a" style="left:1019px;top:543px;width:13px;height:134px;background:#2a2a2a;"></div>
<svg style="left:1021.5px;top:550px;" width="9" height="5" viewBox="0 0 9 5"><path d="M0 5H9L4.5 0Z" fill="#8a8a8a"/></svg>
<svg style="left:1021.5px;top:667px;" width="9" height="5" viewBox="0 0 9 5"><path d="M0 0H9L4.5 5Z" fill="#8a8a8a"/></svg>
<div class="a" style="left:1021px;top:560px;width:9px;height:100px;background:#262626;"></div>
<div class="a" style="left:2px;top:677px;width:44px;height:21px;background:#1f1f1f;border:1px solid #3d3d3d;border-top-color:#1f1f1f;"></div>
<div class="t" style="left:8px;top:678.77px;font-size:12.2px;line-height:16px;color:#ffffff;transform:scaleX(0.9945);">Autos</div>
<div class="t" style="left:51px;top:678.77px;font-size:12.2px;line-height:16px;color:#c8c8c8;transform:scaleX(0.9366);">Locals</div>
<div class="t" style="left:96px;top:678.77px;font-size:12.2px;line-height:16px;color:#c8c8c8;transform:scaleX(0.9488);">Watch 1</div>
<div class="a" style="left:1040px;top:495px;width:291px;height:183px;background:#1f1f1f;border:1px solid #3d3d3d;"></div>
<div class="t" style="left:1045px;top:498.77px;font-size:12.2px;line-height:16px;color:#d0d0d0;transform:scaleX(0.9305);">Error List</div>
<svg style="left:1283px;top:505px;" width="7" height="4" viewBox="0 0 7 4"><path d="M0 0H7L3.5 4Z" fill="#d0d0d0"/></svg>
<svg style="left:1298px;top:500px;" width="9" height="12" viewBox="0 0 9 12"><path d="M2 .600h5M2.500.6v5.900M6.500.6v5.900M.5 6.500h8M4.500 6.500v5" fill="none" stroke="#e0e0e0" stroke-width="1.200"/><path d="M5.500 1v5.500" stroke="#e0e0e0" stroke-width="1.600"/></svg>
<svg style="left:1314px;top:500px;" width="11" height="11" viewBox="0 0 11 11"><path d="M.8.800l9.400 9.400M10.200.8.800 10.200" stroke="#e6e6e6" stroke-width="1.400"/></svg>
<div class="a" style="left:1048px;top:520px;width:150px;height:21px;background:#313131;border:1px solid #3f3f3f;"></div>
<div class="t" style="left:1052px;top:522.77px;font-size:12.2px;line-height:16px;color:#ffffff;transform:scaleX(0.9586);">Entire Solution</div>
<svg style="left:1188px;top:530px;" width="7" height="4" viewBox="0 0 7 4"><path d="M0 0H7L3.5 4Z" fill="#c8c8c8"/></svg>
<div class="a" style="left:1204px;top:521px;width:1px;height:19px;background:#444;"></div>
<div class="a" style="left:1209px;top:519px;width:70px;height:23px;background:#1f1f1f;border:1px solid #7160e8;"></div>
<svg style="left:1214px;top:524px;" width="13" height="13" viewBox="0 0 13 13"><circle cx="6.500" cy="6.500" r="6.300" fill="#e5484d"/><path d="M4 4l5 5M9 4 4 9" stroke="#1f1f1f" stroke-width="1.300"/></svg>
<div class="t" style="left:1232px;top:522.27px;font-size:12.2px;line-height:16px;color:#ffffff;transform:scaleX(0.8998);">0 Errors</div>
<div class="a" style="left:1282px;top:521px;width:1px;height:19px;background:#444;"></div>
<div class="a" style="left:1322px;top:522px;width:2px;height:3px;background:#c8c8c8;"></div>
<div class="a" style="left:1326px;top:522px;width:2px;height:3px;background:#c8c8c8;"></div>
<div class="a" style="left:1043px;top:543px;width:285px;height:21px;background:#2f2f2f;border:1px solid #3a3a3a;"></div>
<div class="t" style="left:1048px;top:545.77px;font-size:12.2px;line-height:16px;color:#e6e6e6;transform:scaleX(0.9187);">Search Error List</div>
<svg style="left:1300px;top:547px;" width="13" height="13" viewBox="0 0 13 13"><circle cx="8" cy="5" r="3.700" fill="none" stroke="#e0e0e0" stroke-width="1.500"/><path d="M5.500 7.500 1 12" stroke="#e0e0e0" stroke-width="1.800"/></svg>
<svg style="left:1317.5px;top:553px;" width="7" height="4" viewBox="0 0 7 4"><path d="M0 0H7L3.5 4Z" fill="#c8c8c8"/></svg>
<div class="a" style="left:1068px;top:566px;width:1px;height:20px;background:#444;"></div>
<div class="a" style="left:1090px;top:566px;width:1px;height:20px;background:#444;"></div>
<div class="a" style="left:1116px;top:566px;width:1px;height:20px;background:#444;"></div>
<div class="a" style="left:1166px;top:566px;width:1px;height:20px;background:#444;"></div>
<div class="a" style="left:1266px;top:566px;width:1px;height:20px;background:#444;"></div>
<div class="a" style="left:1043px;top:586px;width:270px;height:1px;background:#555;"></div>
<svg style="left:1106px;top:569px;" width="6" height="6" viewBox="0 0 6 6"><path d="M0 0h6v6M1.500 1.500h3v3" fill="none" stroke="#aaa" stroke-width=".9"/></svg>
<div class="t" style="left:1120px;top:568.77px;font-size:12.2px;line-height:16px;color:#e6e6e6;transform:scaleX(0.9609);">Code</div>
<div class="t" style="left:1170px;top:568.77px;font-size:12.2px;line-height:16px;color:#e6e6e6;transform:scaleX(0.9841);">Description</div>
<div class="t" style="left:1270px;top:568.77px;font-size:12.2px;line-height:16px;color:#e6e6e6;transform:scaleX(0.9753);">Project</div>
<div class="a" style="left:1043px;top:587px;width:270px;height:73px;overflow:hidden">
<div class="t" style="left:127px;top:1.77px;font-size:12.2px;line-height:16px;color:#e6e6e6;transform:scaleX(0.9644);">Possible null</div>
<div class="t" style="left:127px;top:16.77px;font-size:12.2px;line-height:16px;color:#e6e6e6;transform:scaleX(0.9515);">reference</div>
<div class="t" style="left:127px;top:31.77px;font-size:12.2px;line-height:16px;color:#e6e6e6;transform:scaleX(0.9695);">argument for</div>
<div class="t" style="left:127px;top:46.77px;font-size:12.2px;line-height:16px;color:#e6e6e6;transform:scaleX(0.9683);">parameter 'source'</div>
<div class="t" style="left:127px;top:61.77px;font-size:12.2px;line-height:16px;color:#e6e6e6;transform:scaleX(1.1397);">in 'int</div>
<div class="t" style="left:77px;top:61.77px;font-size:12.2px;line-height:16px;color:#569cd6;transform:scaleX(0.8400);">CS8604</div>
<div class="t" style="left:227px;top:61.77px;font-size:12.2px;line-height:16px;color:#e6e6e6;transform:scaleX(0.9191);">Second</div>
<svg style="left:55px;top:64px;" width="12" height="11" viewBox="0 0 12 11"><path d="M6 .500 11.500 10.500H.5z" fill="#f5d37c"/><path d="M6 4v3.500" stroke="#1f1f1f" stroke-width="1.300"/><circle cx="6" cy="9" r=".8" fill="#1f1f1f"/></svg>
</div>
<div class="a" style="left:1314px;top:566px;width:15px;height:94px;background:#2a2a2a;"></div>
<svg style="left:1317.5px;top:574px;" width="9" height="5" viewBox="0 0 9 5"><path d="M0 5H9L4.5 0Z" fill="#9a9a9a"/></svg>
<div class="a" style="left:1317px;top:583px;width:9px;height:10px;background:#4d4d4d;"></div>
<svg style="left:1317.5px;top:650px;" width="9" height="5" viewBox="0 0 9 5"><path d="M0 0H9L4.5 5Z" fill="#9a9a9a"/></svg>
<div class="a" style="left:1043px;top:660px;width:271px;height:17px;background:#2a2a2a;"></div>
<svg style="left:1046px;top:664px;" width="6" height="9" viewBox="0 0 6 9"><path d="M6 0v9L0 4.500z" fill="#9a9a9a"/></svg>
<svg style="left:1301px;top:664px;" width="6" height="9" viewBox="0 0 6 9"><path d="M0 0v9l6-4.500z" fill="#9a9a9a"/></svg>
<div class="a" style="left:1058px;top:663px;width:93px;height:9px;background:#4d4d4d;"></div>
<div class="t" style="left:1046px;top:678.77px;font-size:12.2px;line-height:16px;color:#c8c8c8;transform:scaleX(0.9308);">Call...</div>
<div class="t" style="left:1088px;top:678.77px;font-size:12.2px;line-height:16px;color:#c8c8c8;transform:scaleX(0.8584);">Bre...</div>
<div class="t" style="left:1129px;top:678.77px;font-size:12.2px;line-height:16px;color:#c8c8c8;transform:scaleX(0.8857);">Exc...</div>
<div class="t" style="left:1171px;top:678.77px;font-size:12.2px;line-height:16px;color:#c8c8c8;transform:scaleX(0.8932);">Co...</div>
<div class="t" style="left:1212px;top:678.77px;font-size:12.2px;line-height:16px;color:#c8c8c8;transform:scaleX(0.8860);">Im...</div>
<div class="t" style="left:1254px;top:678.77px;font-size:12.2px;line-height:16px;color:#c8c8c8;transform:scaleX(0.9727);">Out...</div>
<div class="a" style="left:1290px;top:677px;width:41px;height:21px;background:#1f1f1f;border:1px solid #3d3d3d;border-top-color:#1f1f1f;"></div>
<div class="t" style="left:1295px;top:678.77px;font-size:12.2px;line-height:16px;color:#ffffff;transform:scaleX(0.9040);">Erro...</div>
<div class="a" style="left:0px;top:704px;width:1358px;height:24px;background:#861b2d;"></div>
<svg style="left:0px;top:709px;" width="17" height="15" viewBox="0 0 17 15"><path d="M.6.600h15v10.500H11l-2.500 2.500L6 11.100H.6z" fill="none" stroke="#f0e0e0" stroke-width="1.200"/></svg>
<div class="t" style="left:24px;top:707.77px;font-size:12.2px;line-height:16px;color:#ffffff;transform:scaleX(0.8798);">Ready</div>
<svg style="left:1011px;top:709px;" width="10" height="14" viewBox="0 0 10 14"><path d="M5 14V1M.8 5.500 5 1l4.200 4.500" fill="none" stroke="#fff" stroke-width="1.300"/></svg>
<div class="t" style="left:1031px;top:707.77px;font-size:12.2px;line-height:16px;color:#ffffff;transform:scaleX(0.9756);">Add to Source Control</div>
<svg style="left:1156px;top:715px;" width="7" height="4" viewBox="0 0 7 4"><path d="M0 4H7L3.5 0Z" fill="#fff"/></svg>
<svg style="left:1186px;top:710px;" width="14" height="12" viewBox="0 0 14 12"><path d="M.6.600h12.800v3H.6zM2.500 3.600v7.800h9V3.600M5 6v3.500h4V6" fill="none" stroke="#fff" stroke-width="1.200"/></svg>
<div class="t" style="left:1207px;top:707.77px;font-size:12.2px;line-height:16px;color:#ffffff;transform:scaleX(0.9423);">Select Repository</div>
<svg style="left:1304px;top:715px;" width="7" height="4" viewBox="0 0 7 4"><path d="M0 4H7L3.5 0Z" fill="#fff"/></svg>
<svg style="left:1330px;top:708px;" width="14" height="15" viewBox="0 0 14 15"><path d="M7 1.500c-3 0-4.500 2-4.500 5v3L1 11.500h12L11.500 9.500v-3c0-3-1.500-5-4.500-5zM5.500 13.500h3" fill="none" stroke="#fff" stroke-width="1.200"/></svg>
<div class="a" style="left:1340px;top:716px;width:10px;height:10px;background:#f3b88a;border-radius:50%"></div>
<div class="t" style="left:1342.5px;top:715.38px;font-size:9px;line-height:12px;color:#5a1a1a;font-weight:700;transform:scaleX(0.9969);">2</div>
<div class="a" style="left:185px;top:242px;width:767px;height:486px;background:#fafafa;overflow:hidden;box-shadow:0 0 0 1px rgba(0,0,0,.35)">
</div>
<div class="a" style="left:185px;top:242px;width:767px;height:48px;background:#d3e3fd;"></div>
<div class="a" style="left:191px;top:249px;width:28px;height:26px;background:#dde8fb;border-radius:8px"></div>
<svg style="left:200px;top:259px;" width="9" height="6" viewBox="0 0 9 6"><path d="M.8.800 4.5 5 8.2 .8" fill="none" stroke="#1f1f1f" stroke-width="1.7"/></svg>
<div class="a" style="left:225px;top:248px;width:231px;height:33px;background:#ffffff;border-radius:10px 10px 0 0"></div>
<svg style="left:217px;top:273px;" width="8" height="8" viewBox="0 0 8 8"><path d="M8 0v8H0A8 8 0 0 0 8 0z" fill="#fff"/></svg>
<svg style="left:456px;top:273px;" width="8" height="8" viewBox="0 0 8 8"><path d="M0 0v8h8A8 8 0 0 1 0 0z" fill="#fff"/></svg>
<svg style="left:232px;top:254px;" width="17" height="17" viewBox="0 0 17 17"><circle cx="8.500" cy="8.500" r="7.600" fill="#85ea2d" stroke="#173647" stroke-width="1.300"/><path d="M6.300 5c-1.300 0-1.300.8-1.300 1.800s0 1.700-1 1.700c1 0 1 .7 1 1.700s0 1.800 1.300 1.800M10.700 5c1.300 0 1.300.8 1.300 1.800s0 1.700 1 1.700c-1 0-1 .7-1 1.700s0 1.800-1.300 1.800" fill="none" stroke="#173647" stroke-width="1"/><path d="M6.500 8.500h4" stroke="#173647" stroke-width="1.200" stroke-dasharray="1 .5"/></svg>
<div class="t" style="left:257px;top:254.84px;font-size:12px;line-height:16px;color:#1f1f1f;transform:scaleX(0.9569);">Swagger UI</div>
<svg style="left:436px;top:258px;" width="9" height="9" viewBox="0 0 9 9"><path d="M.8.800l7.400 7.400M8.200.8.800 8.200" stroke="#1f1f1f" stroke-width="1.500"/></svg>
<svg style="left:471px;top:257px;" width="11" height="11" viewBox="0 0 11 11"><path d="M5.500 0v11M0 5.500h11" stroke="#1f1f1f" stroke-width="1.500"/></svg>
<div class="a" style="left:832.5px;top:261px;width:10px;height:1.2px;background:#1f1f1f;"></div>
<svg style="left:878px;top:257px;" width="10" height="10" viewBox="0 0 10 10"><path d="M.6.600h8.800v8.800H.6z" fill="none" stroke="#1f1f1f" stroke-width="1.200"/></svg>
<svg style="left:923px;top:256px;" width="12" height="12" viewBox="0 0 12 12"><path d="M.7.700l10.600 10.600M11.300.7.700 11.300" stroke="#1f1f1f" stroke-width="1.200"/></svg>
<div class="a" style="left:185px;top:281px;width:767px;height:48px;background:#ffffff;border-radius:0 8px 0 0;"></div>
<svg style="left:201px;top:299px;" width="13" height="12" viewBox="0 0 13 12"><path d="M12.500 6H1M6 1 1 6l5 5" fill="none" stroke="#b4b8be" stroke-width="1.500"/></svg>
<svg style="left:236px;top:299px;" width="13" height="12" viewBox="0 0 13 12"><path d="M.5 6H12M7 1l5 5-5 5" fill="none" stroke="#b4b8be" stroke-width="1.500"/></svg>
<svg style="left:272px;top:298px;" width="14" height="14" viewBox="0 0 14 14"><path d="M12 4.500A5.600 5.600 0 1 0 12.600 9" fill="none" stroke="#444746" stroke-width="1.600"/><path d="M12.800.8v4.400H8.400z" fill="#444746"/></svg>
<div class="a" style="left:305px;top:288px;width:563px;height:34px;background:#e6ebf4;border-radius:17px"></div>
<div class="a" style="left:310px;top:293px;width:24px;height:24px;background:#ffffff;border-radius:50%"></div>
<svg style="left:315px;top:299px;" width="14" height="12" viewBox="0 0 14 12"><circle cx="3" cy="2.800" r="2" fill="none" stroke="#444746" stroke-width="1.400"/><path d="M7 2.800h6.500" stroke="#444746" stroke-width="1.500"/><circle cx="10.500" cy="9.200" r="2" fill="none" stroke="#444746" stroke-width="1.400"/><path d="M.5 9.200H7" stroke="#444746" stroke-width="1.500"/></svg>
<div class="t" style="left:342px;top:296.32px;font-size:13.5px;line-height:18px;color:#5e6064;transform:scaleX(1.0428);"><span style="color:#1f1f1f">localhost</span>:7275/swagger/index.html</div>
<svg style="left:836px;top:297px;" width="16" height="15" viewBox="0 0 16 15"><path d="M8 1.200 10 5.800l5 .5-3.800 3.300 1.100 4.900L8 11.900l-4.300 2.600 1.100-4.900L1 6.300l5-.5z" fill="none" stroke="#444746" stroke-width="1.400" stroke-linejoin="round"/></svg>
<div class="a" style="left:884px;top:295px;width:20px;height:20px;background:#6f95a3;border-radius:50%"></div>
<div class="t" style="left:890.5px;top:299.03px;font-size:10px;line-height:13px;color:#ffffff;transform:scaleX(0.9676);">R</div>
<div class="a" style="left:928.5px;top:298px;width:3px;height:3px;background:#444746;border-radius:50%"></div>
<div class="a" style="left:928.5px;top:303.5px;width:3px;height:3px;background:#444746;border-radius:50%"></div>
<div class="a" style="left:928.5px;top:309px;width:3px;height:3px;background:#444746;border-radius:50%"></div>
<div class="a" style="left:185px;top:329px;width:752px;height:59.4px;background:#1b1b1b;"></div>
<svg style="left:205px;top:339px;" width="35" height="35" viewBox="0 0 35 35"><circle cx="17.500" cy="17.500" r="17.200" fill="#85ea2d"/><path d="M13.800 9c-3.200 0-3.300 1.700-3.300 3.900 0 2.200 0 3.700-2.600 4.600 2.600.9 2.600 2.400 2.600 4.600 0 2.200.1 3.900 3.300 3.900M21.200 9c3.200 0 3.300 1.700 3.300 3.900 0 2.200 0 3.700 2.600 4.600-2.600.9-2.600 2.400-2.600 4.600 0 2.200-.1 3.900-3.300 3.900" fill="none" stroke="#173647" stroke-width="2.300"/><circle cx="13.700" cy="17.500" r="1.300" fill="#173647"/><circle cx="17.500" cy="17.500" r="1.300" fill="#173647"/><circle cx="21.300" cy="17.500" r="1.300" fill="#173647"/></svg>
<div class="t" style="left:246.5px;top:339.88px;font-size:24px;line-height:31px;color:#ffffff;transform:scaleX(0.8445);">Swagger</div>
<div class="a" style="left:329px;top:362px;width:2px;height:1px;background:#9a9a9a;"></div>
<div class="t" style="left:247px;top:370.44px;font-size:6.8px;line-height:9px;color:#e8e8e8;transform:scaleX(0.9397);">Supported by</div>
<div class="t" style="left:289.5px;top:369.67px;font-size:7.6px;line-height:10px;color:#ffffff;font-weight:700;transform:scaleX(0.9890);letter-spacing:.9px;">SMARTBEAR</div>
<div class="t" style="left:409px;top:348.46px;font-size:16px;line-height:21px;color:#ffffff;font-weight:700;transform:scaleX(0.9933);">Select a definition</div>
<div class="a" style="left:555px;top:344px;width:362px;height:30px;background:#f7f7f7;border:1px solid #62a03f;border-width:2px;border-radius:4px;"></div>
<div class="t" style="left:568px;top:350.15px;font-size:14px;line-height:18px;color:#3b4151;font-weight:700;transform:scaleX(0.9896);">Second_API_project v1</div>
<svg style="left:890px;top:356px;" width="10" height="6" viewBox="0 0 10 6"><path d="M.8.800 5.0 5 9.2 .8" fill="none" stroke="#1f1f1f" stroke-width="1.8"/></svg>
<div class="t" style="left:205px;top:436.03px;font-size:36px;line-height:47px;color:#3b4151;font-weight:700;transform:scaleX(0.9978);">User Mangment API</div>
<div class="a" style="left:549px;top:439.5px;width:31px;height:19px;background:#7d8492;border-radius:9.500px"></div>
<div class="t" style="left:557px;top:441.34px;font-size:12px;line-height:16px;color:#ffffff;font-weight:700;transform:scaleX(1.1228);">v1</div>
<div class="a" style="left:585px;top:439.5px;width:62px;height:19px;background:#89bf04;border-radius:9.500px"></div>
<div class="t" style="left:590px;top:441.34px;font-size:12px;line-height:16px;color:#ffffff;font-weight:700;transform:scaleX(1.1297);">OAS 3.0</div>
<div class="t" style="left:205px;top:483.34px;font-size:12px;line-height:16px;color:#4990e2;transform:scaleX(1.0021);">https://localhost:7275/swagger/v1/swagger.json</div>
<div class="t" style="left:215px;top:558.18px;font-size:24px;line-height:31px;color:#3b4151;font-weight:700;transform:scaleX(1.0048);">Department</div>
<svg style="left:872px;top:567px;" width="18" height="10" viewBox="0 0 18 10"><path d="M1 9 9 1.200 17 9" fill="none" stroke="#1f1f1f" stroke-width="1.700"/></svg>
<div class="a" style="left:205px;top:599px;width:712px;height:1px;background:#c4c6ca;"></div>
<div class="a" style="left:205px;top:605.3px;width:712px;height:37px;background:#ecf3fb;border:1px solid #61affe;border-radius:4px;box-shadow:0 0 3px rgba(0,0,0,.19);"></div>
<div class="a" style="left:211px;top:611.0px;width:80px;height:26px;background:#61affe;border-radius:3px"></div>
<div class="t" style="left:239px;top:615.05px;font-size:13.7px;line-height:18px;color:#ffffff;font-weight:700;transform:scaleX(0.8884);">GET</div>
<div class="t mono" style="left:301px;top:617.37px;font-size:11px;line-height:14px;color:#3b4151;transform:scaleX(1.0027);-webkit-text-stroke-width:.45px;">/api/Department/myown</div>
<svg style="left:886px;top:616.8px;" width="18" height="10" viewBox="0 0 18 10"><path d="M.8.800 9.0 9 17.2 .8" fill="none" stroke="#111" stroke-width="1.6"/></svg>
<div class="a" style="left:205px;top:658px;width:712px;height:37px;background:#ecf3fb;border:1px solid #61affe;border-radius:4px;box-shadow:0 0 3px rgba(0,0,0,.19);"></div>
<div class="a" style="left:211px;top:663.7px;width:80px;height:26px;background:#61affe;border-radius:3px"></div>
<div class="t" style="left:239px;top:667.75px;font-size:13.7px;line-height:18px;color:#ffffff;font-weight:700;transform:scaleX(0.8884);">GET</div>
<div class="t mono" style="left:301px;top:670.07px;font-size:11px;line-height:14px;color:#3b4151;transform:scaleX(0.9998);-webkit-text-stroke-width:.45px;">/api/Department/{id}</div>
<svg style="left:886px;top:669.5px;" width="18" height="10" viewBox="0 0 18 10"><path d="M.8.800 9.0 9 17.2 .8" fill="none" stroke="#111" stroke-width="1.6"/></svg>
<div class="a" style="left:205px;top:711px;width:712px;height:37px;background:#fbf1e6;border:1px solid #fca130;border-radius:4px;box-shadow:0 0 3px rgba(0,0,0,.19);"></div>
<div class="a" style="left:211px;top:716.7px;width:80px;height:26px;background:#fca130;border-radius:3px"></div>
<div class="t" style="left:239px;top:720.75px;font-size:13.7px;line-height:18px;color:#ffffff;font-weight:700;transform:scaleX(0.9132);">PUT</div>
<div class="t mono" style="left:301px;top:723.07px;font-size:11px;line-height:14px;color:#3b4151;transform:scaleX(0.9998);-webkit-text-stroke-width:.45px;">/api/Department/{id}</div>
<svg style="left:886px;top:722.5px;" width="18" height="10" viewBox="0 0 18 10"><path d="M.8.800 9.0 9 17.2 .8" fill="none" stroke="#111" stroke-width="1.6"/></svg>
<div class="t" dir="rtl" style="left:597px;top:627px;font-family:Liberation Sans,DejaVu Sans,sans-serif;font-weight:700;font-size:51px;line-height:64px;color:#70707c;-webkit-text-stroke:2.500px #70707c;opacity:.2;transform:scaleX(0.8738);">مستقل</div>
<div class="t" style="left:597px;top:684.33px;font-size:23px;line-height:30px;color:#70707c;font-weight:700;transform:scaleX(1.1489);opacity:.2;">mostaql.com</div>
<div class="a" style="left:937px;top:329px;width:15px;height:399px;background:#fafafa;"></div>
<svg style="left:939.5px;top:335px;" width="10" height="5" viewBox="0 0 10 5"><path d="M0 5h10L5 0z" fill="#8b8b8b"/></svg>
<div class="a" style="left:940px;top:347px;width:9px;height:245px;background:#8b8b8b;border-radius:4.500px"></div>
</body></html>
